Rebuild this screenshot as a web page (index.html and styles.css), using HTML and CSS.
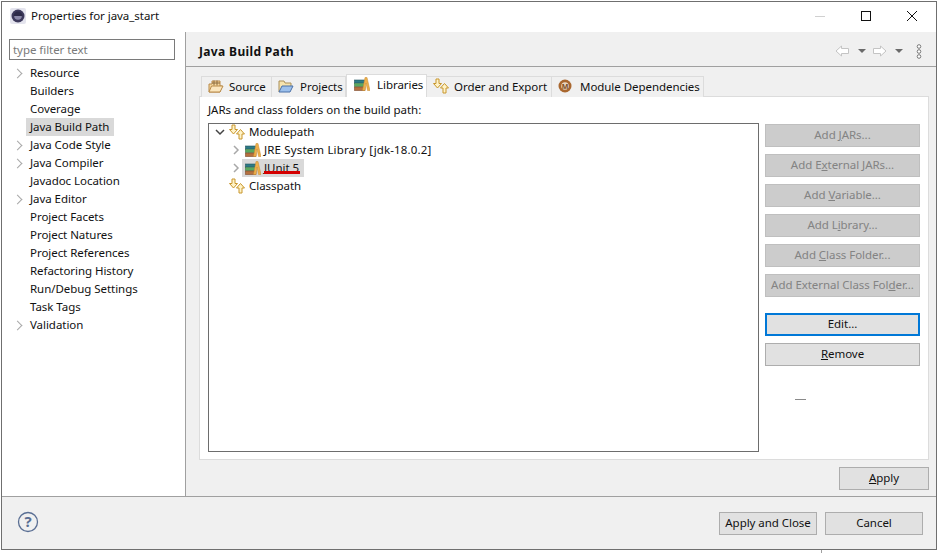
FILE: index.html
```html
<!DOCTYPE html>
<html>
<head>
  <title>Properties for java_start</title>
  <link rel="stylesheet" href="styles.css">
</head>
<body>
  <svg class="defs" width="0" height="0">
    <defs>
      <symbol id="order" viewBox="0 0 16 16">
        <path d="M3 1h3v4.500h2.500L4.500 10 .5 5.500H3z" fill="#fff3c8" stroke="#c8962c"/>
        <path d="M10 15v-5H7.500l4-4.500 4 4.500H13v5z" fill="#fff3c8" stroke="#c8962c"/>
      </symbol>
      <symbol id="books" viewBox="0 0 16 14">
        <rect x="0.500" y="3" width="10" height="3" fill="#2d7b86" stroke="#22555f" stroke-width="0.600"/>
        <rect x="0.500" y="6.500" width="10" height="3" fill="#5aa95e" stroke="#3c7a44" stroke-width="0.600"/>
        <rect x="0.500" y="10" width="10.500" height="3.500" fill="#b5713f" stroke="#7d4a2c" stroke-width="0.600"/>
        <path d="M8.500 13.500L11 .5h2l3 13h-2.500L12 6l-1 7.500z" fill="#eeb04c" stroke="#c78a30" stroke-width="0.500"/>
      </symbol>
    </defs>
  </svg>

  <div class="dialog">
    <div class="titlebar">
      <svg class="app-icon" width="16" height="16" viewBox="0 0 16 16">
        <rect x="0" y="0" width="16" height="16" rx="2" fill="#e4e4ee"/>
        <circle cx="8" cy="8" r="6.500" fill="#3d3a5c"/>
        <circle cx="8" cy="8" r="3.800" fill="#8a88a8"/>
        <path d="M3.500 8a4.500 4.500 0 0 1 9 0z" fill="#2c2a48"/>
      </svg>
      <span class="title">Properties for java_start</span>
      <div class="win-controls">
        <svg width="12" height="12" viewBox="0 0 12 12"><path d="M1 6.500h10" stroke="#d0d0d0"/></svg>
        <svg width="12" height="12" viewBox="0 0 12 12"><rect x="1.500" y="1.500" width="9" height="9" fill="none" stroke="#111"/></svg>
        <svg width="12" height="12" viewBox="0 0 12 12"><path d="M1 1l10 10M11 1L1 11" stroke="#111" fill="none"/></svg>
      </div>
    </div>

    <div class="content">
      <aside class="sidebar">
        <div class="filter">type filter text</div>
        <ul class="nav">
          <li><span class="chev"></span><span class="nav-label">Resource</span></li>
          <li><span class="nav-label">Builders</span></li>
          <li><span class="nav-label">Coverage</span></li>
          <li><span class="nav-label selected">Java Build Path</span></li>
          <li><span class="chev"></span><span class="nav-label">Java Code Style</span></li>
          <li><span class="chev"></span><span class="nav-label">Java Compiler</span></li>
          <li><span class="nav-label">Javadoc Location</span></li>
          <li><span class="chev"></span><span class="nav-label">Java Editor</span></li>
          <li><span class="nav-label">Project Facets</span></li>
          <li><span class="nav-label">Project Natures</span></li>
          <li><span class="nav-label">Project References</span></li>
          <li><span class="nav-label">Refactoring History</span></li>
          <li><span class="nav-label">Run/Debug Settings</span></li>
          <li><span class="nav-label">Task Tags</span></li>
          <li><span class="chev"></span><span class="nav-label">Validation</span></li>
        </ul>
      </aside>

      <main class="main">
        <div class="page-head">
          <h1>Java Build Path</h1>
          <div class="page-tools">
            <svg width="15" height="12" viewBox="0 0 15 12"><path d="M6.500 1L1 6l5.500 5V8.500h7v-5h-7z" fill="#fff" stroke="#c4c4c4"/></svg>
            <span class="drop"></span>
            <svg width="15" height="12" viewBox="0 0 15 12"><path d="M8.500 1L14 6l-5.500 5V8.500h-7v-5h7z" fill="#fff" stroke="#c4c4c4"/></svg>
            <span class="drop"></span>
            <svg class="dots" width="6" height="15" viewBox="0 0 6 15">
              <circle cx="3" cy="2.500" r="1.800" fill="#fff" stroke="#777"/>
              <circle cx="3" cy="7.500" r="1.800" fill="#fff" stroke="#777"/>
              <circle cx="3" cy="12.500" r="1.800" fill="#fff" stroke="#777"/>
            </svg>
          </div>
        </div>

        <div class="tabs">
          <div class="tab tab-source">
            <svg width="16" height="14" viewBox="0 0 16 14">
              <path d="M1 13V5h3V2h8v5h2l-2 6z" fill="#f6d9a0" stroke="#b98a48"/>
              <path d="M6 1.500v5M9 1.500v5M4 4h8" stroke="#8c6a3c" fill="none"/>
              <path d="M1 13l2.500-6H15l-3 6z" fill="#fbe6bd" stroke="#b98a48"/>
            </svg>
            Source
          </div>
          <div class="tab tab-projects">
            <svg width="16" height="14" viewBox="0 0 16 14">
              <path d="M1 13V2h5l1 2h6v3" fill="#f6e3ae" stroke="#a98f58"/>
              <path d="M1 13l3-6h11l-3 6z" fill="#9cc0ec" stroke="#4a70a8"/>
            </svg>
            Projects
          </div>
          <div class="tab tab-libs active">
            <svg width="16" height="14"><use href="#books"/></svg>
            Libraries
          </div>
          <div class="tab tab-order">
            <svg width="16" height="16"><use href="#order"/></svg>
            Order and Export
          </div>
          <div class="tab tab-module">
            <svg class="module-icon" width="14" height="14" viewBox="0 0 14 14">
              <circle cx="7" cy="7" r="6.500" fill="#a9672f"/>
              <circle cx="7" cy="7" r="3.800" fill="#e9d6bf"/>
              <text x="7" y="9.500" text-anchor="middle" class="module-m">M</text>
            </svg>
            Module Dependencies
          </div>
        </div>

        <section class="panel">
          <div class="panel-label">JARs and class folders on the build path:</div>
          <div class="panel-body">
            <div class="tree">
              <div class="row">
                <svg class="arrow" width="10" height="10" viewBox="0 0 10 10"><path d="M1 3l4 4 4-4" fill="none" stroke="#444" stroke-width="1.500"/></svg>
                <svg class="row-icon" width="16" height="16"><use href="#order"/></svg>
                <span class="row-name">Modulepath</span>
              </div>
              <div class="row child">
                <svg class="arrow" width="10" height="10" viewBox="0 0 10 10"><path d="M3 1l4 4-4 4" fill="none" stroke="#a8a8a8" stroke-width="1.500"/></svg>
                <span class="row-text">
                  <svg class="row-icon" width="16" height="14"><use href="#books"/></svg>
                  <span class="row-name jre">JRE System Library [jdk-18.0.2]</span>
                </span>
              </div>
              <div class="row child">
                <svg class="arrow" width="10" height="10" viewBox="0 0 10 10"><path d="M3 1l4 4-4 4" fill="none" stroke="#a8a8a8" stroke-width="1.500"/></svg>
                <span class="row-text row-selected">
                  <svg class="row-icon" width="16" height="14"><use href="#books"/></svg>
                  <span class="row-name marked">JUnit 5<span class="red-mark"></span></span>
                </span>
              </div>
              <div class="row">
                <span class="arrow-space"></span>
                <svg class="row-icon" width="16" height="16"><use href="#order"/></svg>
                <span class="row-name">Classpath</span>
              </div>
            </div>

            <div class="side-buttons">
              <button class="btn" disabled>Add <u>J</u>ARs...</button>
              <button class="btn" disabled>Add E<u>x</u>ternal JARs...</button>
              <button class="btn" disabled>Add <u>V</u>ariable...</button>
              <button class="btn" disabled>Add L<u>i</u>brary...</button>
              <button class="btn" disabled>Add <u>C</u>lass Folder...</button>
              <button class="btn" disabled>Add External Class Fol<u>d</u>er...</button>
              <button class="btn focused">Edit...</button>
              <button class="btn"><u>R</u>emove</button>
              <span class="dash"></span>
            </div>
          </div>
        </section>

        <div class="apply-row">
          <button class="btn apply"><u>A</u>pply</button>
        </div>
      </main>
    </div>

    <div class="footer">
      <svg class="help" width="22" height="22" viewBox="0 0 22 22">
        <circle cx="11" cy="11" r="9.500" fill="none" stroke="#5a6f94" stroke-width="1.300"/>
        <text x="11" y="16" text-anchor="middle" class="help-q">?</text>
      </svg>
      <div class="footer-buttons">
        <button class="btn">Apply and Close</button>
        <button class="btn">Cancel</button>
      </div>
    </div>
  </div>

  <div class="behind">
    <span>java.lang.Enum cannot be resolved. It is indirectly referenced from required .class files</span>
    <span class="behind-file">ConstantDemo_2.java</span>
  </div>
</body>
</html>
```

FILE: styles.css
```css
* {
  box-sizing: border-box;
}

html, body {
  margin: 0;
  height: 553px;
  overflow: hidden;
}

body {
  background: #fff;
  font-family: "Noto Sans", "Open Sans", sans-serif;
  font-size: 11.5px;
  letter-spacing: -0.05px;
  color: #111;
  padding: 1px 0 0 1px;
}

.defs {
  display: block;
  height: 0;
}

.dialog {
  width: 936px;
  height: 549px;
  border: 1px solid #6f6f6f;
  display: flex;
  flex-direction: column;
  background: #f0f0f0;
}

.titlebar {
  height: 30px;
  flex: none;
  background: #fff;
  display: flex;
  align-items: center;
  padding: 0 0 2px 8px;
}

.title {
  margin-top: -2px;
}

.app-icon {
  margin-right: 5px;
}

.win-controls {
  margin-left: auto;
  display: flex;
  gap: 34px;
  padding-right: 18px;
}

.content {
  flex: 1;
  display: flex;
  min-height: 0;
}

.sidebar {
  width: 184px;
  flex: none;
  background: #fff;
  border-right: 1px solid #a0a0a0;
  padding: 7px 0 0 7px;
}

.filter {
  width: 166px;
  height: 21px;
  border: 1px solid #7a7a7a;
  padding-left: 3px;
  line-height: 20px;
  color: #7a7a7a;
}

.nav {
  list-style: none;
  margin: 4px 0 0;
  padding: 0;
}

.nav li {
  height: 18px;
  padding-left: 17px;
  position: relative;
  display: flex;
  align-items: center;
}

.nav-label {
  display: block;
  height: 18px;
  line-height: 17px;
  padding: 0 4px;
}

.selected {
  background: #d9d9d9;
  padding-right: 5px;
}

.chev {
  position: absolute;
  left: 5px;
  top: 6px;
  width: 7px;
  height: 7px;
  border-top: 1.500px solid #a8a8a8;
  border-right: 1.500px solid #a8a8a8;
  transform: rotate(45deg);
}

.main {
  flex: 1;
  min-width: 0;
  display: flex;
  flex-direction: column;
  padding-left: 13px;
  padding-right: 7px;
}

.page-head {
  height: 35px;
  margin-left: -13px;
  margin-right: -7px;
  padding: 4px 14px 0 13px;
  border-bottom: 1px solid #a0a0a0;
  display: flex;
  align-items: center;
  justify-content: space-between;
}

h1 {
  margin: 0;
  font-size: 12px;
  font-weight: 700;
  letter-spacing: 0.35px;
}

.page-tools {
  display: flex;
  align-items: center;
}

.drop {
  width: 0;
  height: 0;
  border-left: 4px solid transparent;
  border-right: 4px solid transparent;
  border-top: 4px solid #6a6a6a;
  margin: 0 6px 0 8px;
}

.dots {
  margin-left: 7px;
}

.tabs {
  display: flex;
  height: 23px;
  margin-top: 7px;
  padding-left: 2px;
  align-items: flex-end;
  position: relative;
  z-index: 1;
  margin-bottom: -1px;
}

.tab {
  height: 21px;
  background: #f0f0f0;
  border: 1px solid #dcdcdc;
  border-left: 0;
  border-bottom: 0;
  display: flex;
  align-items: center;
  gap: 5px;
  padding: 0 0 2px 6px;
  white-space: nowrap;
}

.tab:first-child {
  border-left: 1px solid #dcdcdc;
}

.tab-source { width: 71px; }
.tab-projects { width: 74px; gap: 6px; }
.tab-libs { width: 81px; gap: 7px; padding-left: 7px; }
.tab-order { width: 125px; }
.tab-module { width: 152px; gap: 8px; padding-left: 6px; }

.tab.active {
  height: 23px;
  background: #fff;
  padding-bottom: 4px;
  border-left: 1px solid #dcdcdc;
}

.module-m {
  font-size: 7px;
  font-weight: 700;
  fill: #7a4a20;
}

.panel {
  width: 730px;
  height: 364px;
  background: #fff;
  border: 1px solid #dcdcdc;
  padding: 5px 8px 0;
}

.panel-label {
  height: 18px;
  line-height: 15px;
}

.panel-body {
  display: flex;
  margin-top: 3px;
  gap: 6px;
}

.tree {
  width: 551px;
  height: 329px;
  border: 1px solid #6d6d6d;
}

.row {
  height: 18px;
  display: flex;
  align-items: center;
  padding-left: 6px;
  white-space: nowrap;
}

.row:first-child {
  margin-top: -1px;
}

.row.child {
  padding-left: 22px;
}

.row-name {
  position: relative;
  top: -0.500px;
}

.jre {
  letter-spacing: 0.15px;
}

.arrow {
  flex: none;
  margin-right: 4px;
}

.arrow-space {
  width: 14px;
  flex: none;
}

.row-icon {
  flex: none;
  margin-right: 4px;
}

.row-text {
  display: flex;
  align-items: center;
  height: 18px;
  padding-right: 3px;
}

.row.child .row-icon {
  margin-right: 3px;
}

.row-selected {
  background: #d9d9d9;
  margin-left: -3px;
  padding-left: 3px;
  padding-right: 5px;
}

.red-mark {
  position: absolute;
  left: 0;
  right: -1px;
  top: 11px;
  height: 3px;
  background: #d40000;
}

.side-buttons {
  width: 155px;
  display: flex;
  flex-direction: column;
  gap: 7px;
  margin-top: 1px;
}

.btn {
  width: 155px;
  height: 23px;
  padding: 0 0 2px;
  border: 1px solid #adadad;
  background: #e1e1e1;
  font-family: inherit;
  font-size: 11.5px;
  letter-spacing: -0.05px;
  color: #111;
  white-space: nowrap;
}

.btn:disabled {
  background: #cccccc;
  border-color: #bfbfbf;
  color: #838383;
}

.btn.focused {
  border: 2px solid #0078d7;
  margin-top: 9px;
}

.dash {
  width: 11px;
  height: 1px;
  background: #8a8a8a;
  margin: 26px 0 0 30px;
}

.apply-row {
  display: flex;
  justify-content: flex-end;
  margin-top: 7px;
}

.btn.apply {
  width: 90px;
}

.footer {
  height: 53px;
  flex: none;
  border-top: 1px solid #a0a0a0;
  display: flex;
  align-items: center;
  justify-content: space-between;
  padding: 0 13px 0 15px;
}

.help {
  margin-top: -2px;
}

.help-q {
  font-size: 15px;
  font-weight: 700;
  fill: #5a6f94;
}

.footer-buttons {
  display: flex;
  gap: 8px;
}

.footer-buttons .btn {
  width: 98px;
}

.behind {
  height: 3px;
  overflow: hidden;
  display: flex;
  line-height: 13px;
  padding-left: 7px;
  background: #fff;
}

.behind-file {
  margin-left: auto;
  width: 116px;
  padding-left: 6px;
  border-left: 1px solid #a0a0a0;
}
```
